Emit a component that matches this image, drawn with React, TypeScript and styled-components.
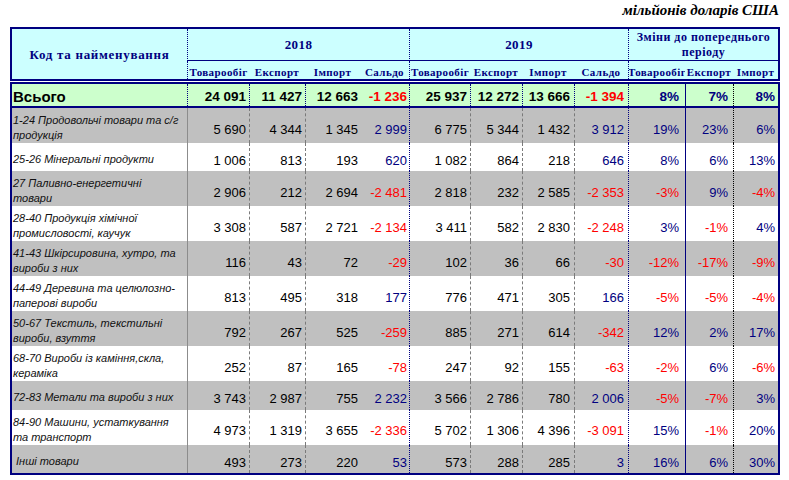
import styled, { createGlobalStyle } from 'styled-components';

const GlobalStyle = createGlobalStyle`
    html, body {
        margin: 0;
        padding: 0;
        background: #ffffff;
    }
    body {
        font-family: "Liberation Sans", Arial, sans-serif;
    }
`;

const NAVY = '#000080';
const COLS = '175px 62px 56px 55px 49px 61px 52px 52px 54px 57px 48px 45px';

type Line = 'none' | 'solid' | 'dashed' | 'dotted' | 'strong' | 'black';

const lineCss: Record<Line, string> = {
    none: 'none',
    solid: '1px solid #8c8c8c',
    dashed: '1px dashed #7a7a7a',
    dotted: `1px dotted ${NAVY}`,
    strong: `1px solid ${NAVY}`,
    black: '1px dotted #000000',
};

// border-left of each column, body rows and the total row
const bodyLines: Line[] = ['none', 'solid', 'dashed', 'dashed', 'none', 'dotted', 'dashed', 'dashed', 'dashed', 'dotted', 'strong', 'black'];
const totalLines: Line[] = ['none', 'dotted', 'dotted', 'dotted', 'none', 'dotted', 'dotted', 'dotted', 'dotted', 'dotted', 'strong', 'black'];
const padRight = [0, 3, 3, 2, 2, 3, 3, 4, 4, 6, 5, 3];
const signedCols = [3, 7, 8, 9, 10];

const Page = styled.div`
    width: 770px;
    margin-left: 10px;
`;

const Caption = styled.div`
    height: 27px;
    text-align: right;
    font-family: "Liberation Serif", "Times New Roman", serif;
    font-weight: bold;
    font-style: italic;
    font-size: 15px;
    line-height: 20px;
    color: #000000;
    padding-right: 1px;
`;

const Header = styled.div`
    display: grid;
    grid-template-columns: ${COLS};
    grid-template-rows: 32px 18px;
    height: 54px;
    box-sizing: border-box;
    border: 2px solid ${NAVY};
    background: #ccffff;
    font-family: "Liberation Serif", "Times New Roman", serif;
    font-weight: bold;
    color: ${NAVY};
`;

const TitleCell = styled.div`
    grid-row: 1 / span 2;
    grid-column: 1;
    display: flex;
    align-items: center;
    justify-content: center;
    font-size: 13px;
    letter-spacing: 0.7px;
    padding-top: 2px;
`;

const GroupCell = styled.div<{ $span: number; $small?: boolean }>`
    grid-column: span ${({ $span }) => $span};
    display: flex;
    align-items: center;
    justify-content: center;
    text-align: center;
    border-left: 1px dotted ${NAVY};
    border-bottom: 1px solid ${NAVY};
    font-size: ${({ $small }) => ($small ? '12px' : '13px')};
    line-height: 15px;
    letter-spacing: ${({ $small }) => ($small ? '0.5px' : '0.4px')};
`;

const SubCell = styled.div<{ $edge?: boolean }>`
    display: flex;
    align-items: flex-end;
    justify-content: center;
    white-space: nowrap;
    overflow: hidden;
    font-size: 11px;
    line-height: 14px;
    letter-spacing: 0.4px;
    border-left: ${({ $edge }) => ($edge ? `1px dotted ${NAVY}` : 'none')};
`;

const TotalRow = styled.div`
    display: grid;
    grid-template-columns: ${COLS};
    height: 26px;
    margin-top: 1px;
    box-sizing: border-box;
    border: 2px solid ${NAVY};
    background: #ccffcc;
`;

const TotalName = styled.div`
    display: flex;
    align-items: center;
    padding: 2px 0 0 1px;
    font-size: 15px;
    font-weight: bold;
    color: #000000;
`;

const Body = styled.div`
    display: grid;
    grid-template-rows: repeat(11, 1fr);
    height: 367px;
    box-sizing: border-box;
    border: 2px solid ${NAVY};
    border-top: none;
`;

const Row = styled.div<{ $shade: boolean }>`
    display: grid;
    grid-template-columns: ${COLS};
    background: ${({ $shade }) => ($shade ? '#c0c0c0' : '#ffffff')};
`;

const Label = styled.div`
    display: flex;
    align-items: center;
    padding: 5px 0 0 1px;
    white-space: pre-wrap;
    font-size: 11px;
    line-height: 15px;
    font-style: italic;
    color: #111111;
`;

const Value = styled.div<{ $line: Line; $pad: number; $tone: 'plain' | 'pos' | 'neg'; $bold?: boolean }>`
    display: flex;
    align-items: center;
    justify-content: flex-end;
    padding-top: ${({ $bold }) => ($bold ? '2px' : '7px')};
    padding-right: ${({ $pad }) => $pad}px;
    border-left: ${({ $line }) => lineCss[$line]};
    font-size: ${({ $bold }) => ($bold ? '13.5px' : '13px')};
    font-weight: ${({ $bold }) => ($bold ? 'bold' : 'normal')};
    white-space: nowrap;
    color: ${({ $tone }) => ($tone === 'neg' ? '#ff0000' : $tone === 'pos' ? NAVY : '#000000')};
`;

interface Item {
    name: string;
    values: string[];
}

const total: string[] = ['24 091', '11 427', '12 663', '-1 236', '25 937', '12 272', '13 666', '-1 394', '8%', '7%', '8%'];

const items: Item[] = [
    { name: '1-24 Продовольчі товари та с/г\nпродукція', values: ['5 690', '4 344', '1 345', '2 999', '6 775', '5 344', '1 432', '3 912', '19%', '23%', '6%'] },
    { name: '25-26 Мінеральні продукти', values: ['1 006', '813', '193', '620', '1 082', '864', '218', '646', '8%', '6%', '13%'] },
    { name: '27 Паливно-енергетичні\nтовари', values: ['2 906', '212', '2 694', '-2 481', '2 818', '232', '2 585', '-2 353', '-3%', '9%', '-4%'] },
    { name: '28-40 Продукція хімічної\nпромисловості, каучук', values: ['3 308', '587', '2 721', '-2 134', '3 411', '582', '2 830', '-2 248', '3%', '-1%', '4%'] },
    { name: '41-43 Шкірсировина, хутро, та\nвироби з них', values: ['116', '43', '72', '-29', '102', '36', '66', '-30', '-12%', '-17%', '-9%'] },
    { name: '44-49 Деревина та целюлозно-\nпаперові вироби', values: ['813', '495', '318', '177', '776', '471', '305', '166', '-5%', '-5%', '-4%'] },
    { name: '50-67 Текстиль, текстильні\nвироби, взуття', values: ['792', '267', '525', '-259', '885', '271', '614', '-342', '12%', '2%', '17%'] },
    { name: '68-70 Вироби із каміння,скла,\nкераміка', values: ['252', '87', '165', '-78', '247', '92', '155', '-63', '-2%', '6%', '-6%'] },
    { name: '72-83 Метали та вироби з них', values: ['3 743', '2 987', '755', '2 232', '3 566', '2 786', '780', '2 006', '-5%', '-7%', '3%'] },
    { name: '84-90 Машини, устаткування\nта транспорт', values: ['4 973', '1 319', '3 655', '-2 336', '5 702', '1 306', '4 396', '-3 091', '15%', '-1%', '20%'] },
    { name: ' Інші товари', values: ['493', '273', '220', '53', '573', '288', '285', '3', '16%', '6%', '30%'] },
];

const subHeads = ['Товарообіг', 'Експорт', 'Імпорт', 'Сальдо', 'Товарообіг', 'Експорт', 'Імпорт', 'Сальдо', 'Товарообіг', 'Експорт', 'Імпорт'];

const toneOf = (col: number, value: string) => {
    if (!signedCols.includes(col)) return 'plain' as const;
    return value.startsWith('-') ? ('neg' as const) : ('pos' as const);
};

const renderValues = (values: string[], lines: Line[], bold?: boolean) =>
    values.map((value, i) => (
        <Value key={i} $line={lines[i + 1]} $pad={padRight[i + 1]} $tone={toneOf(i, value)} $bold={bold}>
            {value}
        </Value>
    ));

export default function App() {
    return (
        <>
            <GlobalStyle />
            <Page>
                <Caption>мільйонів доларів США</Caption>
                <Header>
                    <TitleCell>Код та найменування</TitleCell>
                    <GroupCell $span={4}>2018</GroupCell>
                    <GroupCell $span={4}>2019</GroupCell>
                    <GroupCell $span={3} $small>
                        Зміни до попереднього
                        <br />
                        періоду
                    </GroupCell>
                    {subHeads.map((head, i) => (
                        <SubCell key={i} $edge={i === 0 || i === 4 || i === 8}>
                            {head}
                        </SubCell>
                    ))}
                </Header>
                <TotalRow>
                    <TotalName>Всього</TotalName>
                    {renderValues(total, totalLines, true)}
                </TotalRow>
                <Body>
                    {items.map((item, idx) => (
                        <Row key={idx} $shade={idx % 2 === 0}>
                            <Label>{item.name}</Label>
                            {renderValues(item.values, bodyLines)}
                        </Row>
                    ))}
                </Body>
            </Page>
        </>
    );
}
